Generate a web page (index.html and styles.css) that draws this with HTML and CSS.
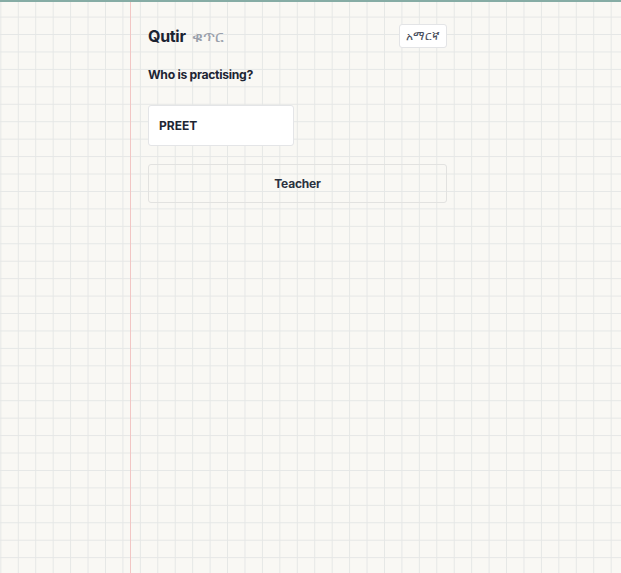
FILE: index.html
```html
<!DOCTYPE html>
<html lang="en">
<head>
<meta charset="utf-8">
<title>Qutir</title>
<link rel="stylesheet" href="styles.css">
</head>
<body>
<div class="page">
  <div class="margin-line"></div>
  <main class="app">
    <header class="header">
      <div class="brand">
        <span class="brand-name">Qutir</span>
        <span class="brand-sub">ቁጥር</span>
      </div>
      <button class="lang-btn">አማርኛ</button>
    </header>
    <h2 class="question">Who is practising?</h2>
    <div class="profiles">
      <button class="profile-card">PREET</button>
    </div>
    <button class="teacher-btn">Teacher</button>
  </main>
</div>
</body>
</html>
```

FILE: styles.css
```css
html, body {
  margin: 0;
  padding: 0;
  height: 100%;
}
body {
  font-family: Inter, "Noto Sans", "DejaVu Sans", sans-serif;
  color: #1e2533;
  background-color: #f9f8f4;
  background-image:
    linear-gradient(to right, #e5e7e6 0 1px, transparent 1px),
    linear-gradient(to bottom, #e5e7e6 0 1px, transparent 1px);
  background-size: 17.45px 17.45px, 17.45px 17.45px;
  background-position: 17.8px 0, 0 16.6px;
  border-top: 2px solid #86aca5;
  box-sizing: border-box;
  overflow: hidden;
}
.page {
  position: relative;
  min-height: 100%;
}
.margin-line {
  position: absolute;
  left: 130px;
  top: 0;
  bottom: 0;
  width: 1px;
  background: #f2c6c4;
}
.app {
  width: 299px;
  margin-left: 148px;
  padding-top: 22px;
}
.header {
  display: flex;
  justify-content: space-between;
  align-items: center;
  height: 24px;
}
.brand {
  display: flex;
  align-items: baseline;
  gap: 6px;
}
.brand-name {
  font-size: 16px;
  font-weight: 700;
  letter-spacing: -0.3px;
  color: #1b2332;
}
.brand-sub {
  font-family: "DejaVu Sans", "Noto Sans", sans-serif;
  font-size: 16px;
  color: #9aa0ab;
}
.lang-btn {
  font-family: "DejaVu Sans", "Noto Sans", sans-serif;
  font-size: 12px;
  color: #4a5160;
  background: #ffffff;
  border: 1px solid #e3e4e6;
  border-radius: 3px;
  height: 24px;
  width: 48px;
  padding: 0;
  cursor: pointer;
}
.question {
  margin: 18px 0 0;
  font-size: 12.2px;
  font-weight: 700;
  letter-spacing: -0.3px;
  color: #1e2533;
  line-height: 18px;
}
.profiles {
  display: flex;
  gap: 12px;
  margin-top: 21px;
}
.profile-card {
  width: 146px;
  height: 41px;
  background: #ffffff;
  border: 1px solid #e4e5e7;
  border-radius: 3px;
  font-family: inherit;
  font-size: 12px;
  font-weight: 700;
  color: #1e2533;
  text-align: left;
  padding: 0 10px;
  cursor: pointer;
}
.teacher-btn {
  display: block;
  width: 299px;
  height: 39px;
  margin-top: 18px;
  background: transparent;
  border: 1px solid #e2e2e0;
  border-radius: 3px;
  font-family: inherit;
  font-size: 12px;
  font-weight: 700;
  letter-spacing: -0.2px;
  color: #2b3240;
  cursor: pointer;
}
```
